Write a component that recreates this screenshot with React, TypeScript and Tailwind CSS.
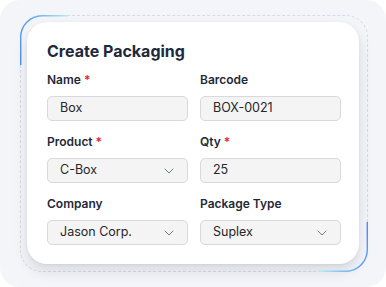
import { ChevronDown } from "lucide-react";

function Label({ text, required }: { text: string; required?: boolean }) {
  return (
    <div className="text-[12px] leading-[16px] font-semibold text-[#1f2937] mb-[8px]">
      {text}
      {required && <span className="text-[#e11d48] ml-[3px]">*</span>}
    </div>
  );
}

function Field({ label, value, required, select }: { label: string; value: string; required?: boolean; select?: boolean }) {
  return (
    <div>
      <Label text={label} required={required} />
      <div className="h-[25px] rounded-[5px] border border-[#d9d9dc] bg-[#f4f4f5] flex items-center justify-between pl-[12px] pr-[10px] text-[12.5px] text-[#27272a]">
        <span>{value}</span>
        {select && <ChevronDown size={16} strokeWidth={1.4} className="text-[#6b7280]" />}
      </div>
    </div>
  );
}

export default function App() {
  return (
    <div className="w-[386px] h-[287px] bg-white" style={{ fontFamily: "Inter, 'Noto Sans', sans-serif" }}>
      <div className="relative w-full h-full rounded-[20px] bg-[#f3f5f9] pl-[20px] pt-[15px]">
        <div className="relative w-[348px] h-[257px] rounded-[22px] border-[1.5px] border-dashed border-[#d8dbe1] p-[6px]">
          <div className="w-[332px] h-[242px] rounded-[20px] bg-white shadow-[0_7px_14px_rgba(15,23,42,0.12),0_1px_3px_rgba(15,23,42,0.06)] pl-[20px] pr-[18px] pt-[17px]">
            <h1 className="text-[16px] leading-[24px] font-bold text-[#1e293b]">Create Packaging</h1>
            <div className="mt-[9px] grid grid-cols-2 gap-x-[12px] gap-y-[13px]">
              <Field label="Name" value="Box" required />
              <Field label="Barcode" value="BOX-0021" />
              <Field label="Product" value="C-Box" required select />
              <Field label="Qty" value="25" required />
              <Field label="Company" value="Jason Corp." select />
              <Field label="Package Type" value="Suplex" select />
            </div>
          </div>
        </div>
        <svg className="absolute left-0 top-0 pointer-events-none" width="386" height="287">
          <defs>
            <linearGradient id="tl" x1="20" y1="65" x2="70" y2="15" gradientUnits="userSpaceOnUse">
              <stop offset="0" stopColor="#3b82f6" />
              <stop offset="0.6" stopColor="#60a5fa" />
              <stop offset="1" stopColor="#b9f0ea" />
            </linearGradient>
            <linearGradient id="br" x1="367" y1="222" x2="318" y2="272" gradientUnits="userSpaceOnUse">
              <stop offset="0" stopColor="#3b82f6" />
              <stop offset="0.6" stopColor="#60a5fa" />
              <stop offset="1" stopColor="#b9f0ea" />
            </linearGradient>
          </defs>
          <path d="M20.75 65 V37 A21.5 21.5 0 0 1 42 15.75 H68" fill="none" stroke="url(#tl)" strokeWidth="1.3" />
          <path d="M367.25 222 V250 A21.5 21.5 0 0 1 346 271.25 H318" fill="none" stroke="url(#br)" strokeWidth="1.3" />
        </svg>
      </div>
    </div>
  );
}
